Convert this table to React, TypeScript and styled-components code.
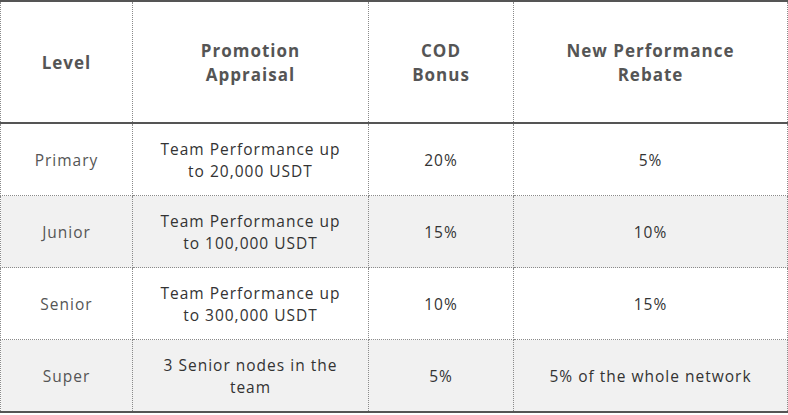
import React from "react";
import styled, { createGlobalStyle } from "styled-components";

const Global = createGlobalStyle`
  html, body { margin: 0; padding: 0; background: #fff; }
  body { font-family: "Open Sans", "Noto Sans", sans-serif; }
`;

const Table = styled.table`
  width: 787px;
  border-collapse: collapse;
  table-layout: fixed;
  border-top: 2px solid #555;
  border-bottom: 2px solid #555;
`;

const HeadCell = styled.th`
  height: 118px;
  padding: 2px 8px 0;
  border-left: 1px dotted #8a8a8a;
  border-right: 1px dotted #8a8a8a;
  border-bottom: 2px solid #555;
  font-size: 17px;
  font-weight: 700;
  line-height: 24px;
  letter-spacing: 1px;
  color: #555;
  text-align: center;
  vertical-align: middle;
`;

const Row = styled.tr<{ $shade: boolean }>`
  background: ${(p) => (p.$shade ? "#f1f1f1" : "#fff")};
`;

const Cell = styled.td`
  height: 71px;
  padding: 0 8px;
  border: 1px dotted #8a8a8a;
  font-size: 15.5px;
  line-height: 22px;
  letter-spacing: 1px;
  color: #333;
  text-align: center;
  vertical-align: middle;
`;

const LevelCell = styled(Cell)`
  color: #555;
`;

const rows = [
  ["Primary", ["Team Performance up", "to 20,000 USDT"], "20%", "5%"],
  ["Junior", ["Team Performance up", "to 100,000 USDT"], "15%", "10%"],
  ["Senior", ["Team Performance up", "to 300,000 USDT"], "10%", "15%"],
  ["Super", ["3 Senior nodes in the", "team"], "5%", "5% of the whole network"],
] as const;

export default function App() {
  return (
    <>
      <Global />
      <Table>
        <colgroup>
          <col style={{ width: 132 }} />
          <col style={{ width: 236 }} />
          <col style={{ width: 145 }} />
          <col style={{ width: 274 }} />
        </colgroup>
        <thead>
          <tr>
            <HeadCell>Level</HeadCell>
            <HeadCell>
              Promotion
              <br />
              Appraisal
            </HeadCell>
            <HeadCell>
              COD
              <br />
              Bonus
            </HeadCell>
            <HeadCell>
              New Performance
              <br />
              Rebate
            </HeadCell>
          </tr>
        </thead>
        <tbody>
          {rows.map((r, i) => (
            <Row key={r[0]} $shade={i % 2 === 1}>
              <LevelCell>{r[0]}</LevelCell>
              <Cell>
                {r[1][0]}
                <br />
                {r[1][1]}
              </Cell>
              <Cell>{r[2]}</Cell>
              <Cell>{r[3]}</Cell>
            </Row>
          ))}
        </tbody>
      </Table>
    </>
  );
}
